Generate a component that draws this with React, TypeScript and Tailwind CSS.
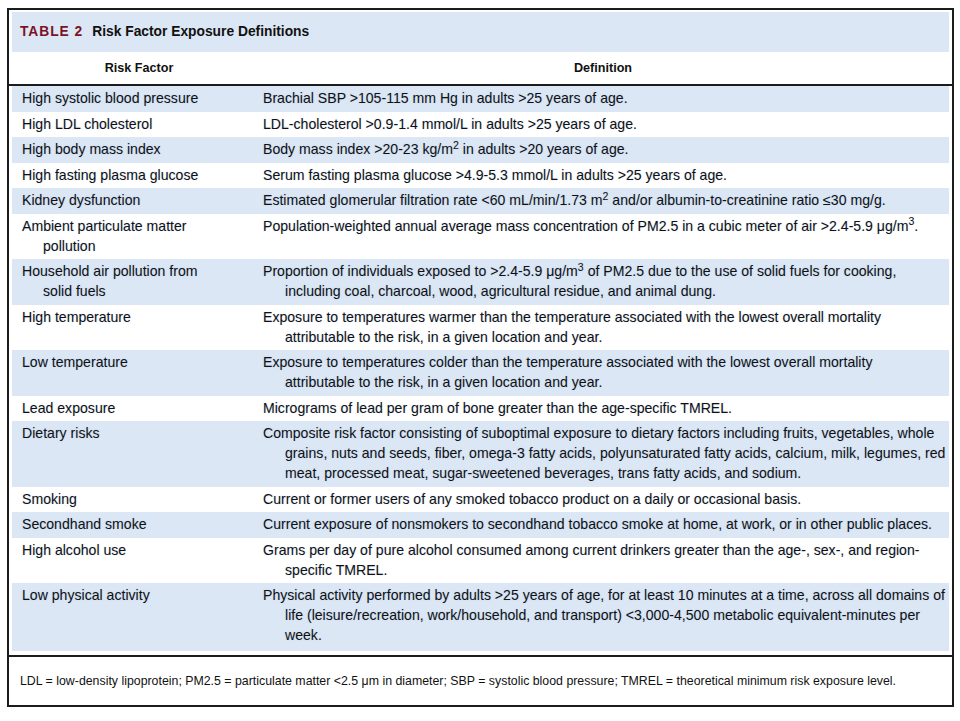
const rows: { factor: React.ReactNode; def: React.ReactNode; blue: boolean }[] = [
  {
    factor: 'High systolic blood pressure',
    def: 'Brachial SBP >105-115 mm Hg in adults >25 years of age.',
    blue: true,
  },
  {
    factor: 'High LDL cholesterol',
    def: 'LDL-cholesterol >0.9-1.4 mmol/L in adults >25 years of age.',
    blue: false,
  },
  {
    factor: 'High body mass index',
    def: (
      <>
        Body mass index &gt;20-23 kg/m<sup>2</sup> in adults &gt;20 years of age.
      </>
    ),
    blue: true,
  },
  {
    factor: 'High fasting plasma glucose',
    def: 'Serum fasting plasma glucose >4.9-5.3 mmol/L in adults >25 years of age.',
    blue: false,
  },
  {
    factor: 'Kidney dysfunction',
    def: (
      <>
        Estimated glomerular filtration rate &lt;60 mL/min/1.73 m<sup>2</sup> and/or
        albumin-to-creatinine ratio ≤30 mg/g.
      </>
    ),
    blue: true,
  },
  {
    factor: (
      <>
        Ambient particulate matter
        <br />
        pollution
      </>
    ),
    def: (
      <>
        Population-weighted annual average mass concentration of PM2.5 in a cubic meter of air
        &gt;2.4-5.9 μg/m<sup>3</sup>.
      </>
    ),
    blue: false,
  },
  {
    factor: (
      <>
        Household air pollution from
        <br />
        solid fuels
      </>
    ),
    def: (
      <>
        Proportion of individuals exposed to &gt;2.4-5.9 μg/m<sup>3</sup> of PM2.5 due to the use of
        solid fuels for cooking,
        <br />
        including coal, charcoal, wood, agricultural residue, and animal dung.
      </>
    ),
    blue: true,
  },
  {
    factor: 'High temperature',
    def: (
      <>
        Exposure to temperatures warmer than the temperature associated with the lowest overall
        mortality
        <br />
        attributable to the risk, in a given location and year.
      </>
    ),
    blue: false,
  },
  {
    factor: 'Low temperature',
    def: (
      <>
        Exposure to temperatures colder than the temperature associated with the lowest overall
        mortality
        <br />
        attributable to the risk, in a given location and year.
      </>
    ),
    blue: true,
  },
  {
    factor: 'Lead exposure',
    def: 'Micrograms of lead per gram of bone greater than the age-specific TMREL.',
    blue: false,
  },
  {
    factor: 'Dietary risks',
    def: (
      <>
        Composite risk factor consisting of suboptimal exposure to dietary factors including
        fruits, vegetables, whole
        <br />
        grains, nuts and seeds, fiber, omega-3 fatty acids, polyunsaturated fatty acids, calcium,
        milk, legumes, red
        <br />
        meat, processed meat, sugar-sweetened beverages, trans fatty acids, and sodium.
      </>
    ),
    blue: true,
  },
  {
    factor: 'Smoking',
    def: 'Current or former users of any smoked tobacco product on a daily or occasional basis.',
    blue: false,
  },
  {
    factor: 'Secondhand smoke',
    def: 'Current exposure of nonsmokers to secondhand tobacco smoke at home, at work, or in other public places.',
    blue: true,
  },
  {
    factor: 'High alcohol use',
    def: (
      <>
        Grams per day of pure alcohol consumed among current drinkers greater than the age-, sex-,
        and region-
        <br />
        specific TMREL.
      </>
    ),
    blue: false,
  },
  {
    factor: 'Low physical activity',
    def: (
      <>
        Physical activity performed by adults &gt;25 years of age, for at least 10 minutes at a
        time, across all domains of
        <br />
        life (leisure/recreation, work/household, and transport) &lt;3,000-4,500 metabolic
        equivalent-minutes per
        <br />
        week.
      </>
    ),
    blue: true,
  },
]

export default function App() {
  return (
    <div className="min-h-screen bg-white pt-[8px] pl-[7px] font-['Liberation_Sans',Arial,sans-serif] text-[#111]">
      <div className="w-[947px] border-2 border-[#1c1c1c]">
        <div className="px-[3px] pt-[2px]">
          <div className="flex h-[40px] items-center bg-[#dce7f5] pl-[8px] text-[13.8px] font-bold">
            <span className="tracking-[0.07em] text-[#7b1327]">TABLE 2</span>
            <span className="ml-[9px]">Risk Factor Exposure Definitions</span>
          </div>
        </div>

        <div className="flex h-[34px] items-center border-b-2 border-[#1c1c1c] px-[3px] text-[12.6px] font-bold">
          <div className="w-[251px] shrink-0 pl-[3px] text-center">Risk Factor</div>
          <div className="flex-1 pr-[6px] text-center">Definition</div>
        </div>

        <div className="px-[3px] pb-[4px]">
          {rows.map((row, i) => (
            <div
              key={i}
              className={`flex whitespace-nowrap pt-[2px] text-[14.1px] leading-[20px] [text-shadow:0_0_1.5px_rgba(140,175,225,0.45)] ${row.blue ? 'bg-[#dce7f5]' : 'bg-white'} ${i === rows.length - 1 ? 'pb-[6px]' : 'pb-[3.5px]'}`}
            >
              <div className="w-[251px] shrink-0 pl-[31px] -indent-[21px]">{row.factor}</div>
              <div className="flex-1 pl-[22px] -indent-[22px]">{row.def}</div>
            </div>
          ))}
        </div>

        <div className="flex h-[50px] items-center border-t-2 border-[#1c1c1c] pl-[11px] text-[12.35px]">
          LDL = low-density lipoprotein; PM2.5 = particulate matter &lt;2.5 μm in diameter; SBP =
          systolic blood pressure; TMREL = theoretical minimum risk exposure level.
        </div>
      </div>
    </div>
  )
}
